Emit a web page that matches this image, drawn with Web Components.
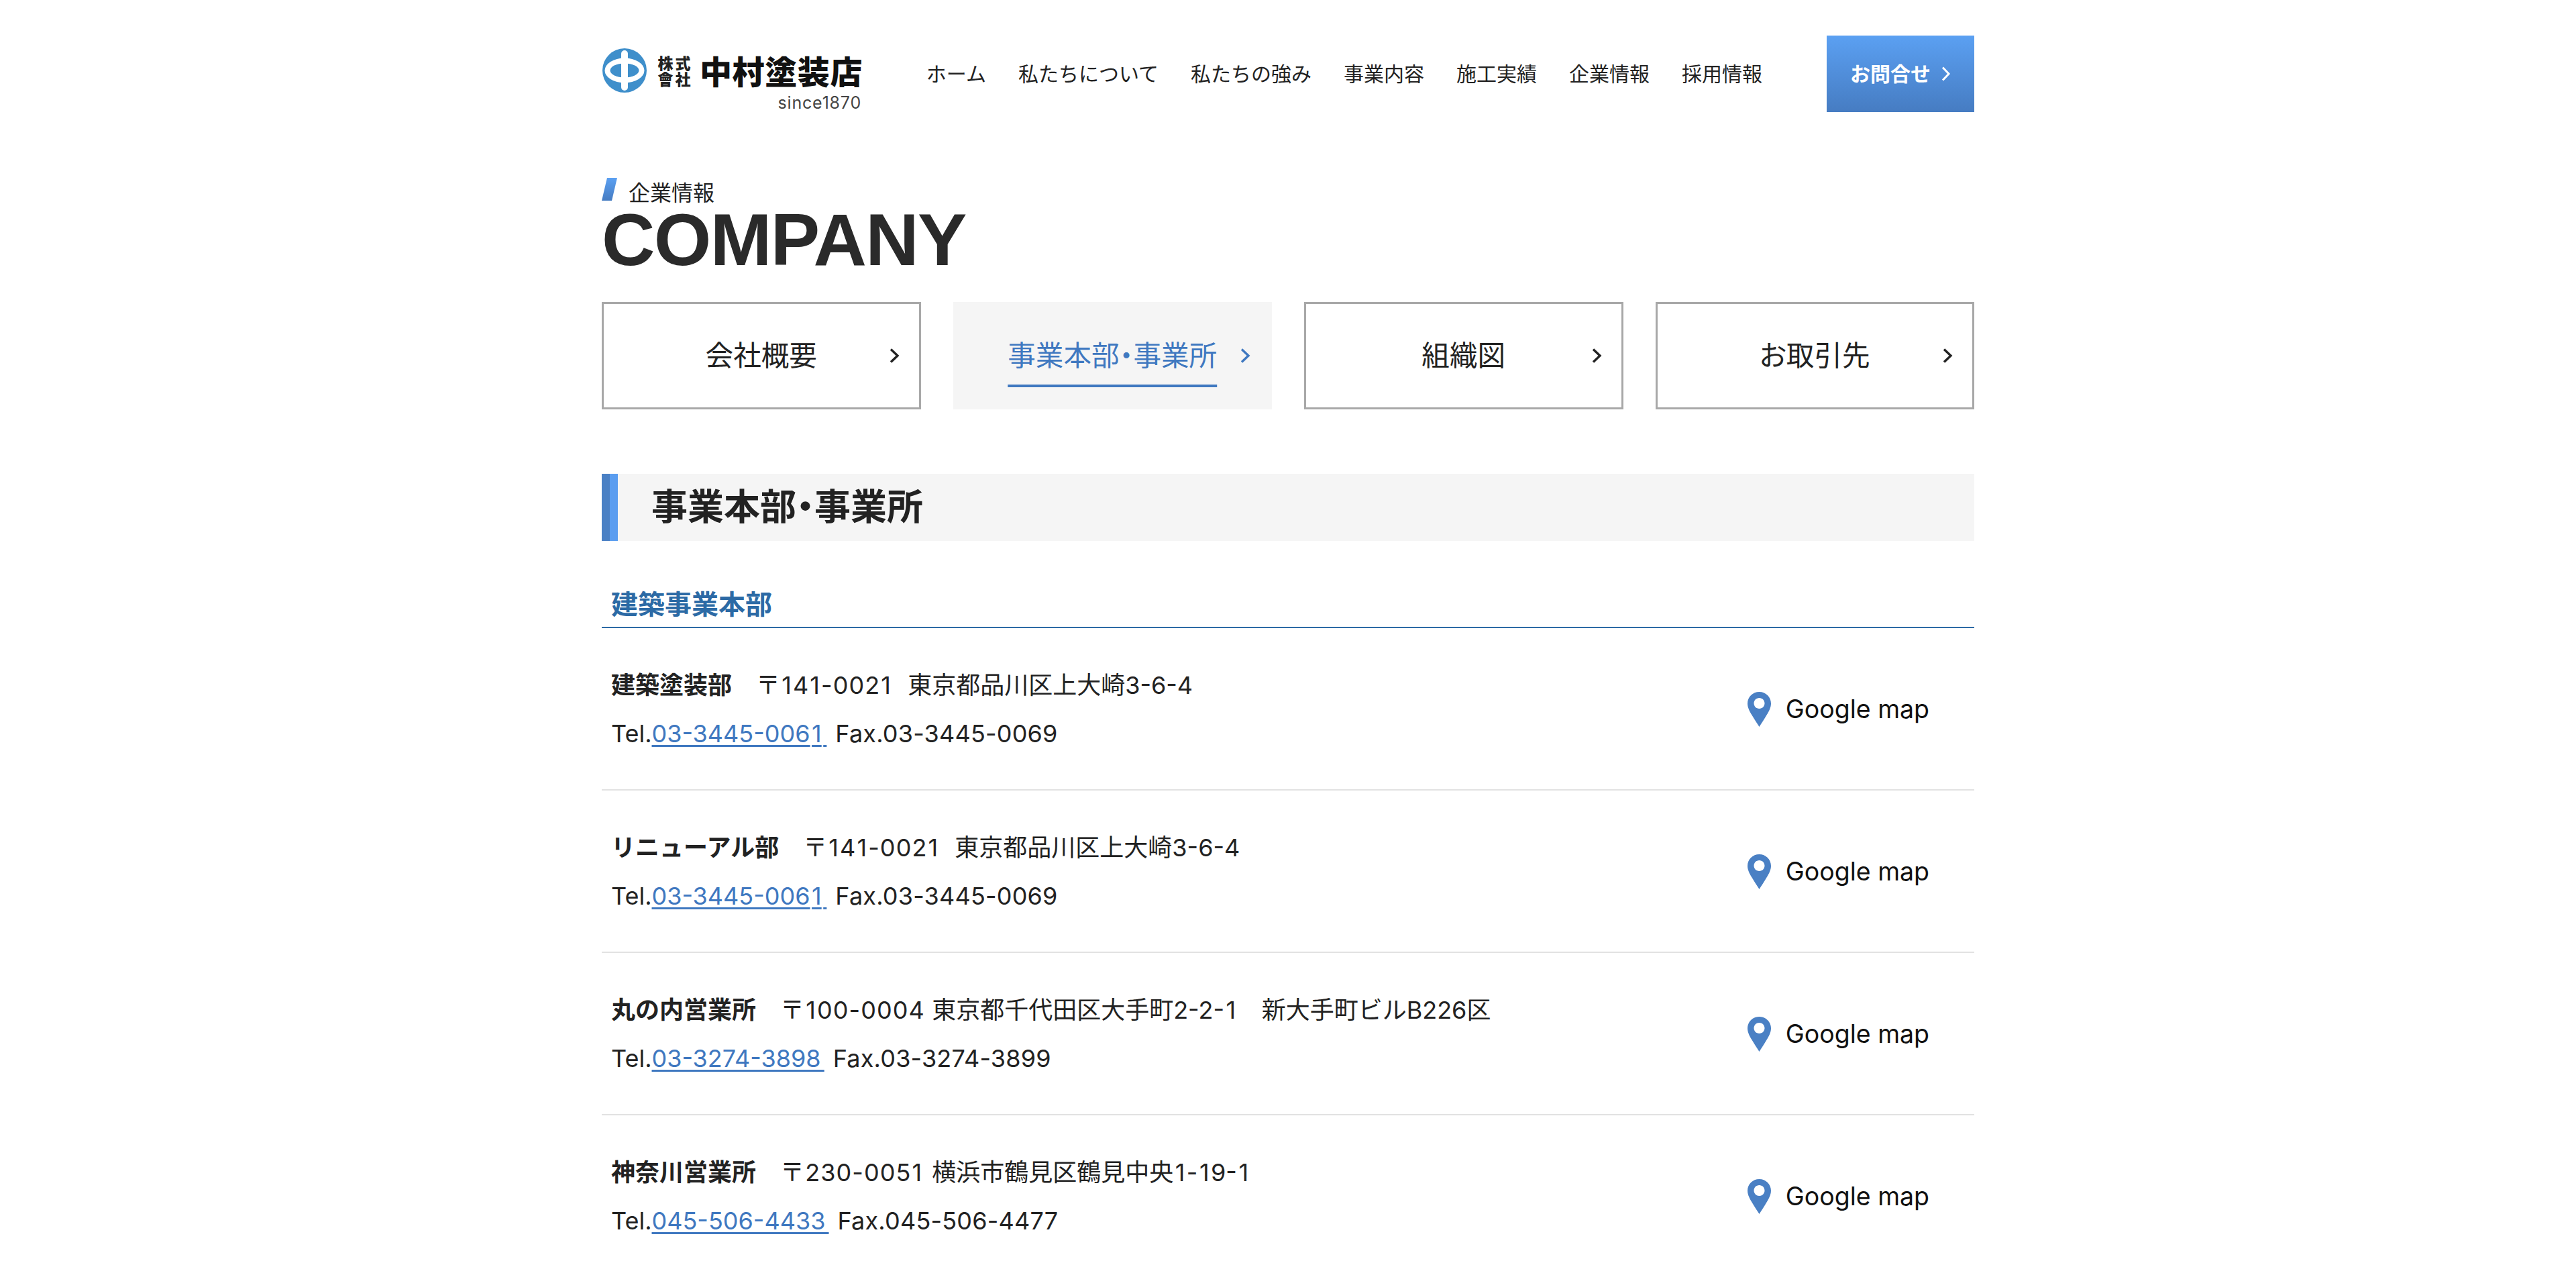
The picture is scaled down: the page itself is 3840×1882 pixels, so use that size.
<!DOCTYPE html>
<html lang="ja"><head><meta charset="utf-8"><title>COMPANY</title>
<style>
html,body{margin:0;padding:0;height:1882px;overflow:hidden;background:#fff}
body{font-family:Inter,"Noto Sans CJK JP",sans-serif;color:#222}
</style></head><body>
<page-shell>
  <site-header>
    <site-logo slot="logo"></site-logo>
    <nav-link>ホーム</nav-link><nav-link>私たちについて</nav-link><nav-link>私たちの強み</nav-link><nav-link>事業内容</nav-link><nav-link>施工実績</nav-link><nav-link>企業情報</nav-link><nav-link>採用情報</nav-link>
    <contact-button slot="cta">お問合せ</contact-button>
  </site-header>
  <page-title kicker="企業情報">COMPANY</page-title>
  <tab-nav>
    <tab-item>会社概要</tab-item>
    <tab-item active>事業本部・事業所</tab-item>
    <tab-item>組織図</tab-item>
    <tab-item>お取引先</tab-item>
  </tab-nav>
  <section-heading>事業本部・事業所</section-heading>
  <sub-heading>建築事業本部</sub-heading>
  <office-row name="建築塗装部" zip="〒141-0021" addr="東京都品川区上大崎3-6-4" tel="03-3445-0061" fax="03-3445-0069"></office-row>
  <office-row name="リニューアル部" zip="〒141-0021" addr="東京都品川区上大崎3-6-4" tel="03-3445-0061" fax="03-3445-0069"></office-row>
  <office-row name="丸の内営業所" zip="〒100-0004" addr="東京都千代田区大手町2-2-1　新大手町ビルB226区" tel="03-3274-3898" fax="03-3274-3899"></office-row>
  <office-row name="神奈川営業所" zip="〒230-0051" addr="横浜市鶴見区鶴見中央1-19-1" tel="045-506-4433" fax="045-506-4477"></office-row>
</page-shell>
<script>
const CJK='"Noto Sans CJK JP"';
function def(name,html){
  customElements.define(name,class extends HTMLElement{
    constructor(){super();this.attachShadow({mode:'open'});}
    connectedCallback(){ if(!this.shadowRoot.innerHTML) this.shadowRoot.innerHTML=typeof html==='function'?html(this):html; }
  });
}
const chev=(w,h,c,sw)=>`<svg width="${w}" height="${h}" viewBox="0 0 ${w} ${h}" fill="none" stroke="${c}" stroke-width="${sw}"><path d="M2 1.5 L${w-3} ${h/2} L2 ${h-1.5}"/></svg>`;

def('page-shell',`<style>:host{display:block;width:2046px;margin:0 auto}</style><slot></slot>`);

def('site-header',`<style>
:host{display:flex;align-items:stretch;height:114px;padding-top:53px}
.nav{display:flex;gap:48px;align-items:center;margin-left:auto;margin-right:96px;padding-bottom:4px}
</style><slot name="logo"></slot><div class="nav"><slot></slot></div><slot name="cta"></slot>`);

def('site-logo',`<style>
:host{display:block;width:387px;margin-top:19px;flex:none}
.top{display:flex;align-items:center;height:65px}
svg{flex:none;display:block;margin-left:1px}
.kk{display:grid;grid-template-columns:26px 26px;grid-auto-rows:24px;margin-left:15px;font:900 23px/24px ${CJK},sans-serif;color:#222;text-align:center;width:52px}
.nm{margin-left:12px;font:900 48px/65px ${CJK},sans-serif;color:#111;letter-spacing:.6px;white-space:nowrap}
.since{font:400 25px/24px Inter,sans-serif;color:#444;text-align:right;margin-top:4px;letter-spacing:.8px}
</style>
<div class="top">
<svg width="66" height="66" viewBox="-33 -33 66 66"><circle r="33" fill="#3f8fcb"/><ellipse rx="29.5" ry="18.5" fill="#fff"/><ellipse rx="21.5" ry="10.5" fill="#3f8fcb"/><rect x="-5" y="-30" width="10" height="60" rx="5" fill="#fff"/></svg>
<div class="kk"><span>株</span><span>式</span><span>會</span><span>社</span></div>
<div class="nm">中村塗装店</div>
</div>
<div class="since">since1870</div>`);

def('nav-link',`<style>:host{display:block;font:400 30px/40px ${CJK},sans-serif;color:#222;white-space:nowrap}</style><slot></slot>`);

def('contact-button',`<style>
:host{display:flex;align-items:center;justify-content:center;gap:16px;flex:none;width:220px;height:114px;background:linear-gradient(#5ba0f2,#467cc2);color:#fff;font:700 30px/40px ${CJK},sans-serif}
span{display:block;padding-bottom:4px}
svg{display:block}
</style><span><slot></slot></span>${chev(14,22,'#fff',3)}`);

def('page-title',h=>`<style>
:host{display:block;padding-top:98px}
.k{display:flex;align-items:flex-start;gap:17px;height:37px;font:400 32px/34px ${CJK},sans-serif;color:#222}
.k svg{display:block;flex:none}
.k span{padding-top:3px}
.t{font:700 110px/110px "Liberation Sans",sans-serif;color:#2a2a2a;letter-spacing:-1.6px}
</style><div class="k"><svg width="23" height="34" viewBox="0 0 23 34"><defs><linearGradient id="g" x1="0" y1="0" x2="0" y2="1"><stop offset="0" stop-color="#5ba0f2"/><stop offset="1" stop-color="#467cc2"/></linearGradient></defs><polygon points="8,0 23,0 15,34 0,34" fill="url(#g)"/></svg><span>${h.getAttribute('kicker')||''}</span></div><div class="t"><slot></slot></div>`);

def('tab-nav',`<style>:host{display:grid;grid-template-columns:repeat(4,1fr);gap:48px;margin-top:38px}</style><slot></slot>`);

def('tab-item',h=>{
  const a=h.hasAttribute('active');
  return `<style>
:host{display:grid;grid-template-columns:1fr auto 1fr;align-items:center;height:160px;box-sizing:border-box;border:3px solid ${a?'transparent':'#a8a8a8'};background:${a?'#f5f5f5':'#fff'};color:${a?'#3f78c0':'#222'};font:400 41.6px/60px ${CJK},sans-serif;font-feature-settings:"palt"}
.x{grid-column:2;white-space:nowrap;padding-bottom:6px;${a?'text-decoration:underline;text-decoration-thickness:4px;text-underline-offset:28px;text-decoration-skip-ink:none;':''}}
svg{grid-column:3;justify-self:end;margin-right:29px;display:block}
</style><span class="x"><slot></slot></span>${chev(15,22,a?'#3f78c0':'#222',3.4)}`;
});

def('section-heading',`<style>
:host{display:block;height:100px;margin-top:96px;background:#f5f5f5;padding-left:74px;font:700 54px/92px ${CJK},sans-serif;font-feature-settings:"palt";color:#222;position:relative}
.bar{display:flex;position:absolute;left:0;top:0;height:100px}
.bar i{display:block;width:12px;height:100%}
</style><div class="bar"><i style="background:#4a80c4"></i><i style="background:#5a9df0"></i></div><slot></slot>`);

def('sub-heading',`<style>
:host{display:block;margin-top:64px;height:64px;padding-left:14px;border-bottom:2px solid #2c6aa5;color:#2c6aa5;font:700 40px/56px ${CJK},sans-serif}
</style><slot></slot>`);

def('map-link',`<style>
:host{display:flex;align-items:center;gap:22px;padding-top:3px;font:400 37.5px/52px Inter,sans-serif;color:#111;white-space:nowrap}
svg{display:block;flex:none}
</style><svg width="35" height="52" viewBox="0 0 35 52"><path fill="#4a80c4" fill-rule="evenodd" d="M17.5 0C7.8 0 0 7.6 0 17.2 0 23 3 29 6.5 34.5 10 40.5 14 46.5 17.5 52 21 46.5 25 40.5 28.5 34.5 32 29 35 23 35 17.2 35 7.6 27.2 0 17.5 0ZM17.5 9C22 9 25.5 12.6 25.5 17S22 25 17.5 25 9.5 21.4 9.5 17 13 9 17.5 9Z"/></svg><slot></slot>`);

const ones=s=>s.replace(/1/g,'<span class="o">1</span>');
def('office-row',h=>{
  const g=n=>h.getAttribute(n)||'';
  return `<style>
:host{display:flex;align-items:center;justify-content:space-between;box-sizing:border-box;height:242px;padding:0 67px 2px 14px;border-bottom:2px solid #e2e2e2;font:400 36px/72px Inter,${CJK},sans-serif;color:#222}
.l{white-space:nowrap}
b{font-family:${CJK},sans-serif;font-weight:700}
a{color:#3f78c0;text-decoration:underline;text-decoration-thickness:3px;text-underline-offset:4px;word-spacing:-5px}
.fx{margin-left:13px;letter-spacing:.2px}
.zip{display:inline-block;width:216px;letter-spacing:1.1px;white-space:nowrap}
.zip .o{padding:0 1px}
.o{padding:0 2.5px}
</style><div><div class="l"><b>${g('name')}</b>　<span class="zip">${ones(g('zip'))}</span> ${ones(g('addr'))}</div><div class="l">Tel.<a>${ones(g('tel'))} </a><span class="fx">Fax.${ones(g('fax'))}</span></div></div><map-link>Google map</map-link>`;
});
</script>
</body></html>
